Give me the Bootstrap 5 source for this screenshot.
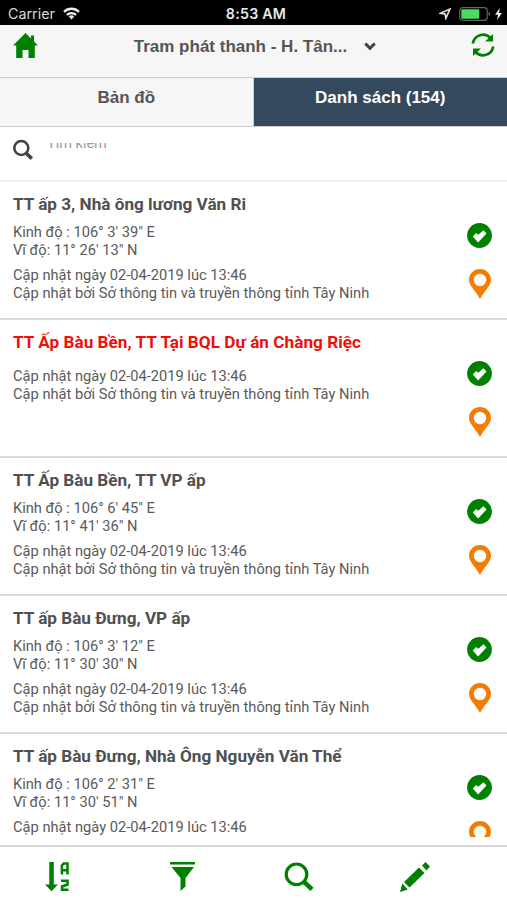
<!DOCTYPE html>
<html lang="vi">
<head>
<meta charset="utf-8">
<meta name="viewport" content="width=device-width, initial-scale=1">
<title>Danh sách trạm</title>
<link href="https://cdn.jsdelivr.net/npm/bootstrap@5.3.0/dist/css/bootstrap.min.css" rel="stylesheet">
<style>
body{font-family:Roboto,sans-serif;color:#5a5a5a;background:#fff;height:900px;overflow:hidden}
svg{display:block;flex:none}
.status{height:25px;background:#000;color:#d8d8d8;font:14.3px/25px Inter,sans-serif;padding:2px 5px 0 8px}
.status .side{flex:1 1 0}
.clock{font-weight:600;color:#e8e8e8;font-size:14.2px;letter-spacing:.25px;padding-left:2px}
.topbar{height:53px;background:#f6f6f6;border-bottom:1px solid #ccc;padding:0 12px 12px 12px;font-family:"Liberation Sans",Arial,sans-serif;font-weight:700;color:#555}
.topbar .heading{font-size:17px;padding-top:3px}
.topbar .chevron{margin-left:17px}
.tabs{height:49px;font:700 17px/40px "Liberation Sans",Arial,sans-serif;border-bottom:1px solid #ccc}
.tabs a{background:#f6f6f6;color:#555;border-right:1px solid #ccc}
.tabs a.current{background:#34495e;color:#fff;border:0}
.searchbar{height:55px;border-bottom:2px solid #eee;padding:12px 12px 0}
.hint{height:6px;overflow:hidden;margin:4px 0 0 13px;font-size:14.5px;line-height:16px;color:#999}
.hint span{display:block;margin-top:-7px}
.stations{height:655px;overflow:hidden}
.station{height:138px;border-bottom:2px solid #d9d9d9;padding:12px 15px 0 13px}
.station h2{font-size:17.15px;line-height:20px;font-weight:700;margin:0;padding-bottom:9px;color:#505050}
.station p{font-size:14.67px;line-height:18.4px;margin:0;padding-bottom:6px;white-space:nowrap}
.station .marks{padding-top:29px;gap:21px}
.station.alert-row h2{color:#f20d0d;padding-bottom:15px;letter-spacing:.03px}
.bottombar{height:56px;margin-top:8px;border-top:2px solid #d4d4d4;color:#008000;padding:15px 0 0 44px}
.bottombar .filter{margin-left:100px}
.bottombar .find{margin-left:88px}
.bottombar .edit{margin-left:86px}
</style>
</head>
<body>
<svg width="0" height="0" class="position-absolute" aria-hidden="true">
<symbol id="ok" viewBox="0 0 25 25"><circle cx="12.5" cy="12.5" r="12.4" fill="#008000"/><path d="M5.800 13.400l3.300-3.500 2.100 1.900 5.300-4.600 3 3.300-8.400 8.900z" fill="#fff"/></symbol>
<symbol id="pin" viewBox="0 0 22 30"><path fill="#f57c00" fill-rule="evenodd" d="M11 0C4.900 0 0 4.800 0 10.800 0 17 6.500 21.500 11 30c4.500-8.500 11-13 11-19.200C22 4.800 17.100 0 11 0zm0 4.800a6.200 6.200 0 1 1 0 12.400 6.200 6.200 0 0 1 0-12.400z"/></symbol>
</svg>
<div class="status d-flex align-items-center">
  <div class="side d-flex align-items-center gap-2"><span>Carrier</span>
    <svg width="17" height="13" viewBox="0 0 17 13" fill="none" stroke="#eee" stroke-width="2.300"><path d="M1 4.800a10.800 10.800 0 0 1 15 0M3.900 7.900a6.600 6.600 0 0 1 9.200 0"/><path d="M5.800 9.600a4 4 0 0 1 5.400 0L8.500 12.500z" fill="#eee" stroke="none"/></svg></div>
  <div class="clock">8:53 AM</div>
  <div class="side d-flex align-items-center justify-content-end">
    <svg class="me-2" width="12" height="12" viewBox="0 0 11 11" fill="none" stroke="#ddd" stroke-width="1.500"><path d="M10 1L6.300 9.500 5.600 5.500 1.300 4.900z"/></svg>
    <svg width="32" height="14" viewBox="0 0 32 14"><rect x=".7" y=".7" width="27.500" height="12.600" rx="3" fill="none" stroke="#666" stroke-width="1.200"/><rect x="2.300" y="2.300" width="18" height="9.400" rx="1" fill="#4cd964"/><path d="M29.700 5v4q1.500-.5 1.500-2t-1.500-2z" fill="#777"/></svg>
    <svg class="ms-1" width="7" height="12" viewBox="0 0 7 12"><path d="M4.800 0L0 6.800h3L2 12l5-7H4z" fill="#eee"/></svg>
  </div>
</div>
<header class="topbar d-flex align-items-center justify-content-between">
  <svg width="27" height="25" viewBox="0 0 27 25"><path d="M13.500 0L1 12.500h3.200V25h6.300v-8h6v8h6.300V12.500H26l-4-4V2.500h-3v3z" fill="#008000"/></svg>
  <div class="heading d-flex align-items-center"><span>Tram phát thanh - H. Tân...</span>
    <svg class="chevron" width="12" height="9" viewBox="0 0 12 9"><path d="M1.300 1.500L6 6.300l4.700-4.800" fill="none" stroke="#444" stroke-width="3"/></svg></div>
  <svg width="24" height="24" viewBox="0 0 24 24"><g fill="none" stroke="#008000" stroke-width="2.700"><path d="M1.800 10.500A10.300 10.300 0 0 1 19.500 5"/><path d="M22.200 13.500A10.300 10.300 0 0 1 4.500 19"/></g><path d="M22 1v7.500h-8zM2 23v-7.500h8z" fill="#008000"/></svg>
</header>
<nav class="tabs d-flex text-center">
  <a class="w-50 text-decoration-none">Bản đồ</a><a class="w-50 text-decoration-none current">Danh sách (154)</a>
</nav>
<div class="searchbar d-flex align-items-start">
  <svg width="22" height="22" viewBox="0 0 22 22" fill="none" stroke="#444" stroke-width="2.600"><circle cx="9.300" cy="9" r="7"/><path d="M14 14l5.800 5.600" stroke-width="3.600"/></svg>
  <div class="hint"><span>Tìm kiếm</span></div>
</div>
<main class="stations">
  <article class="station d-flex justify-content-between"><div><h2>TT ấp 3, Nhà ông lương Văn Ri</h2><p>Kinh độ : 106° 3' 39" E<br>Vĩ độ: 11° 26' 13" N</p><p>Cập nhật ngày 02-04-2019 lúc 13:46<br>Cập nhật bởi Sở thông tin và truyền thông tỉnh Tây Ninh</p></div>
    <div class="marks d-flex flex-column align-items-center"><svg width="25" height="25"><use href="#ok"/></svg><svg width="22" height="30"><use href="#pin"/></svg></div></article>
  <article class="station alert-row d-flex justify-content-between"><div><h2>TT Ấp Bàu Bền, TT Tại BQL Dự án Chàng Riệc</h2><p>Cập nhật ngày 02-04-2019 lúc 13:46<br>Cập nhật bởi Sở thông tin và truyền thông tỉnh Tây Ninh</p></div>
    <div class="marks d-flex flex-column align-items-center"><svg width="25" height="25"><use href="#ok"/></svg><svg width="22" height="30"><use href="#pin"/></svg></div></article>
  <article class="station d-flex justify-content-between"><div><h2>TT Ấp Bàu Bền, TT VP ấp</h2><p>Kinh độ : 106° 6' 45" E<br>Vĩ độ: 11° 41' 36" N</p><p>Cập nhật ngày 02-04-2019 lúc 13:46<br>Cập nhật bởi Sở thông tin và truyền thông tỉnh Tây Ninh</p></div>
    <div class="marks d-flex flex-column align-items-center"><svg width="25" height="25"><use href="#ok"/></svg><svg width="22" height="30"><use href="#pin"/></svg></div></article>
  <article class="station d-flex justify-content-between"><div><h2>TT ấp Bàu Đưng, VP ấp</h2><p>Kinh độ : 106° 3' 12" E<br>Vĩ độ: 11° 30' 30" N</p><p>Cập nhật ngày 02-04-2019 lúc 13:46<br>Cập nhật bởi Sở thông tin và truyền thông tỉnh Tây Ninh</p></div>
    <div class="marks d-flex flex-column align-items-center"><svg width="25" height="25"><use href="#ok"/></svg><svg width="22" height="30"><use href="#pin"/></svg></div></article>
  <article class="station d-flex justify-content-between"><div><h2>TT ấp Bàu Đưng, Nhà Ông Nguyễn Văn Thể</h2><p>Kinh độ : 106° 2' 31" E<br>Vĩ độ: 11° 30' 51" N</p><p>Cập nhật ngày 02-04-2019 lúc 13:46</p></div>
    <div class="marks d-flex flex-column align-items-center"><svg width="25" height="25"><use href="#ok"/></svg><svg width="22" height="30"><use href="#pin"/></svg></div></article>
</main>
<footer class="bottombar d-flex align-items-start">
  <svg width="26" height="30" viewBox="0 0 26 30"><path d="M5.300 0h4.500v22.500H14L7.500 29.300 1 22.500h4.300z" fill="currentColor"/><path d="M17.900 12.500V3.500l1.800-2h3.800v11M18 8.300h5.500M17 18.800h6.500v3.700l-5.500 2v3.300h6.500" fill="none" stroke="currentColor" stroke-width="2.500"/></svg>
  <svg class="filter" width="26" height="30" viewBox="0 0 26 30" fill="currentColor"><path d="M0 0h25v2.500H0zM1.500 5h22.500L15.500 16v8.500L10.500 29V16z"/></svg>
  <svg class="find" width="30" height="30" viewBox="0 0 30 30" fill="none" stroke="currentColor"><circle cx="12.500" cy="12.300" r="10.300" stroke-width="3.200"/><path d="M19.500 19.300l8.500 8" stroke-width="4.600"/></svg>
  <svg class="edit" width="30" height="30" viewBox="0 0 30 30" fill="currentColor"><path d="M0 30l2.300-8.500 5.500 6zM4 20L19 5.500l5.500 5.500L9.500 25.500zM22 3.500L25.500 0 30 4.500 26.500 8.500z"/></svg>
</footer>
<script src="https://cdn.jsdelivr.net/npm/bootstrap@5.3.0/dist/js/bootstrap.bundle.min.js"></script>
</body>
</html>
